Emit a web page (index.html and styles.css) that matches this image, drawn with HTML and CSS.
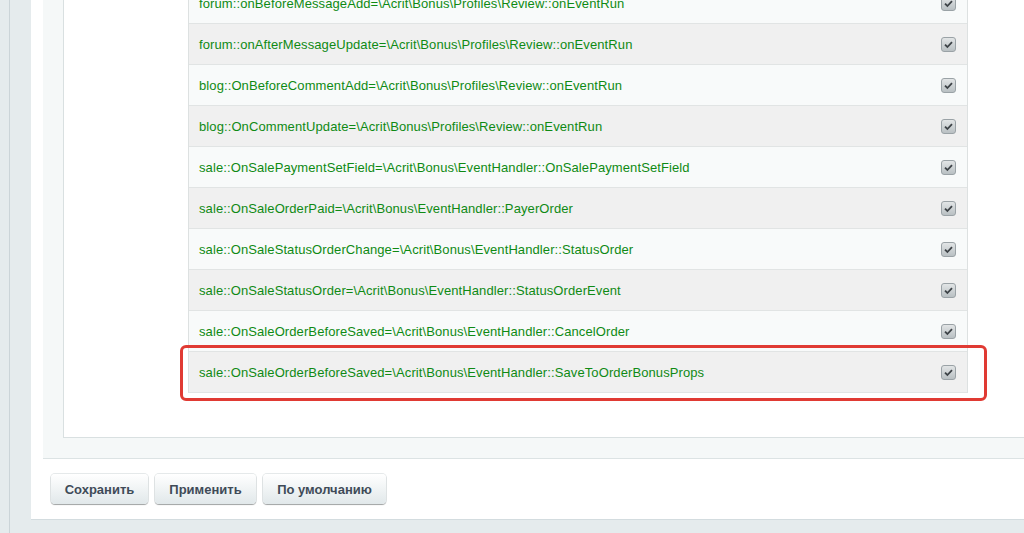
FILE: index.html
```html
<!DOCTYPE html>
<html>
<head>
<meta charset="utf-8">
<link rel="stylesheet" href="styles.css">
</head>
<body>
<div class="page">
  <div class="strip"></div>
  <div class="panel">
    <div class="light">
      <div class="inner">
        <div class="table">
          <div class="row odd"><span class="t">forum::onBeforeMessageAdd=\Acrit\Bonus\Profiles\Review::onEventRun</span><span class="cb"><svg viewBox="0 0 15 15" width="15" height="15"><path d="M4 7.6 L6.4 10 L11 5.2" fill="none" stroke="#3d4347" stroke-width="1.8"/></svg></span></div>
          <div class="row even"><span class="t">forum::onAfterMessageUpdate=\Acrit\Bonus\Profiles\Review::onEventRun</span><span class="cb"><svg viewBox="0 0 15 15" width="15" height="15"><path d="M4 7.6 L6.4 10 L11 5.2" fill="none" stroke="#3d4347" stroke-width="1.8"/></svg></span></div>
          <div class="row odd"><span class="t">blog::OnBeforeCommentAdd=\Acrit\Bonus\Profiles\Review::onEventRun</span><span class="cb"><svg viewBox="0 0 15 15" width="15" height="15"><path d="M4 7.6 L6.4 10 L11 5.2" fill="none" stroke="#3d4347" stroke-width="1.8"/></svg></span></div>
          <div class="row even"><span class="t">blog::OnCommentUpdate=\Acrit\Bonus\Profiles\Review::onEventRun</span><span class="cb"><svg viewBox="0 0 15 15" width="15" height="15"><path d="M4 7.6 L6.4 10 L11 5.2" fill="none" stroke="#3d4347" stroke-width="1.8"/></svg></span></div>
          <div class="row odd"><span class="t">sale::OnSalePaymentSetField=\Acrit\Bonus\EventHandler::OnSalePaymentSetField</span><span class="cb"><svg viewBox="0 0 15 15" width="15" height="15"><path d="M4 7.6 L6.4 10 L11 5.2" fill="none" stroke="#3d4347" stroke-width="1.8"/></svg></span></div>
          <div class="row even"><span class="t">sale::OnSaleOrderPaid=\Acrit\Bonus\EventHandler::PayerOrder</span><span class="cb"><svg viewBox="0 0 15 15" width="15" height="15"><path d="M4 7.6 L6.4 10 L11 5.2" fill="none" stroke="#3d4347" stroke-width="1.8"/></svg></span></div>
          <div class="row odd"><span class="t">sale::OnSaleStatusOrderChange=\Acrit\Bonus\EventHandler::StatusOrder</span><span class="cb"><svg viewBox="0 0 15 15" width="15" height="15"><path d="M4 7.6 L6.4 10 L11 5.2" fill="none" stroke="#3d4347" stroke-width="1.8"/></svg></span></div>
          <div class="row even"><span class="t">sale::OnSaleStatusOrder=\Acrit\Bonus\EventHandler::StatusOrderEvent</span><span class="cb"><svg viewBox="0 0 15 15" width="15" height="15"><path d="M4 7.6 L6.4 10 L11 5.2" fill="none" stroke="#3d4347" stroke-width="1.8"/></svg></span></div>
          <div class="row odd"><span class="t">sale::OnSaleOrderBeforeSaved=\Acrit\Bonus\EventHandler::CancelOrder</span><span class="cb"><svg viewBox="0 0 15 15" width="15" height="15"><path d="M4 7.6 L6.4 10 L11 5.2" fill="none" stroke="#3d4347" stroke-width="1.8"/></svg></span></div>
          <div class="row even hl"><span class="t">sale::OnSaleOrderBeforeSaved=\Acrit\Bonus\EventHandler::SaveToOrderBonusProps</span><span class="cb"><svg viewBox="0 0 15 15" width="15" height="15"><path d="M4 7.6 L6.4 10 L11 5.2" fill="none" stroke="#3d4347" stroke-width="1.8"/></svg></span><span class="frame"></span></div>
        </div>
      </div>
    </div>
    <div class="buttons">
      <button class="btn">Сохранить</button>
      <button class="btn">Применить</button>
      <button class="btn">По умолчанию</button>
    </div>
  </div>
</div>
</body>
</html>
```

FILE: styles.css
```css
html, body {
  margin: 0;
  padding: 0;
  height: 533px;
  overflow: hidden;
  background: #e5ebed;
  font-family: "Liberation Sans", Arial, sans-serif;
}
.page {
  display: flex;
  height: 533px;
  align-items: flex-start;
}
.strip {
  width: 21px;
  margin-left: 9px;
  height: 533px;
  border-left: 1px solid #cbd4d8;
  flex: none;
}
.panel {
  flex: 1;
  background: #fff;
  padding-left: 12px;
  border-bottom: 1px solid #d3dcdf;
  margin-top: -17px;
  padding-bottom: 15px;
}
.light {
  background: #f5f8f8;
  border-bottom: 1px solid #dce3e4;
  padding-left: 20px;
  padding-bottom: 20px;
}
.inner {
  background: #fff;
  border-left: 1px solid #d9e0e1;
  border-bottom: 1px solid #d9e0e1;
  padding-left: 124px;
  padding-bottom: 44px;
}
.table {
  width: 778px;
  border-left: 1px solid #dde1e1;
  border-right: 1px solid #dde1e1;
}
.row {
  position: relative;
  height: 40px;
  border-bottom: 1px solid #e1e4e4;
  display: flex;
  align-items: center;
  justify-content: space-between;
  padding-left: 10px;
  padding-right: 11px;
  font-size: 13px;
  letter-spacing: 0.1px;
  color: #0f8a14;
}
.row.odd { background: #f8fafa; }
.row.even { background: #f0f0f0; }
.cb {
  width: 15px;
  height: 15px;
  box-sizing: border-box;
  border: 1px solid #9aa2a6;
  border-radius: 3px;
  background: linear-gradient(#e2e5e6, #b9c0c3);
  display: flex;
  align-items: center;
  justify-content: center;
}
.cb svg {
  display: block;
  margin: -1px;
}
.frame {
  position: absolute;
  left: -9px;
  right: -20px;
  top: -7px;
  bottom: -9px;
  border: 3px solid #e03a33;
  border-radius: 6px;
  pointer-events: none;
}
.buttons {
  display: flex;
  gap: 7px;
  padding: 15px 0 0 8px;
}
.btn {
  height: 30px;
  padding: 0 13px;
  border: 0;
  border-radius: 4px;
  background: linear-gradient(#ffffff, #e1e8ea);
  box-shadow: 0 1px 1px rgba(0,0,0,0.3), 0 0 0 1px rgba(180,192,196,0.35);
  font-family: "Liberation Sans", Arial, sans-serif;
  font-weight: bold;
  font-size: 13px;
  color: #3f4b58;
}
.btn:nth-child(1) { width: 97px; }
.btn:nth-child(2) { width: 101px; }
.btn:nth-child(3) { width: 123px; }
```
